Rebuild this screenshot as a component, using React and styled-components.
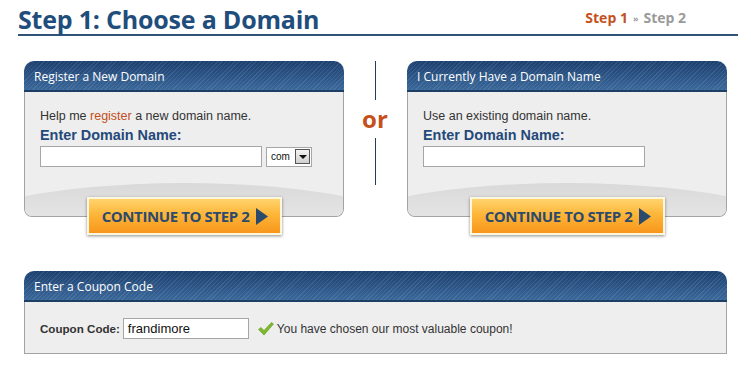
import React from 'react'
import styled, { createGlobalStyle } from 'styled-components';

const GlobalStyle = createGlobalStyle`
    body {
        margin: 0;
        background: #ffffff;
        font-family: "Liberation Sans", Arial, sans-serif;
    }
`;

const Page = styled.div`
    width: 751px;
    padding: 4px 0 0 18px;
    box-sizing: border-box;
`;

const TitleBar = styled.div`
    width: 720px;
    display: flex;
    justify-content: space-between;
    align-items: flex-end;
    border-bottom: 2px solid #2f5477;
    height: 32px;
    box-sizing: border-box;

    h1 {
        margin: 0;
        font-family: "Open Sans", sans-serif;
        font-weight: 700;
        font-size: 25px;
        line-height: 30px;
        color: #1f4d7c;
        letter-spacing: -0.2px;
    }
`;

const Steps = styled.div`
    font-family: "Open Sans", sans-serif;
    font-weight: 700;
    font-size: 14px;
    line-height: 30px;
    margin-right: 52px;
    color: #9a9a9a;

    .current { color: #c4501c; }
    .sep { font-size: 9px; margin: 0 5px; vertical-align: 1px; }
`;

const Row = styled.div`
    display: flex;
    margin: ${p => p.$top}px 0 0 6px;
`;

const Column = styled.div`
    display: flex;
    flex-direction: column;
    align-items: center;
    width: 320px;
`;

const Panel = styled.div`
    width: ${p => p.$width}px;
    align-self: stretch;
`;

const PanelHeader = styled.div`
    height: 31px;
    border-radius: 10px 10px 0 0;
    border-bottom: 2px solid #1d3f66;
    box-sizing: border-box;
    padding: 1px 10px 0;
    display: flex;
    align-items: center;
    font-family: "Open Sans", sans-serif;
    font-size: 12px;
    color: #ffffff;
    background:
        repeating-linear-gradient(135deg, rgba(255,255,255,0) 0 2px, rgba(255,255,255,0.09) 2px 3px),
        linear-gradient(#1b406f, #3a679a);
`;

const PanelBody = styled.div`
    position: relative;
    overflow: hidden;
    height: ${p => p.$height}px;
    box-sizing: border-box;
    background: #eeeeee;
    border: 1px solid #a3a3a3;
    border-top: none;
    border-radius: ${p => p.$rounded ? '0 0 8px 8px' : '0'};
    padding: ${p => p.$padding};

    &::after {
        content: '';
        display: ${p => p.$rounded ? 'block' : 'none'};
        position: absolute;
        left: -30%;
        width: 160%;
        top: 91px;
        height: 120px;
        border-radius: 50%;
        background: linear-gradient(#d9d9d9, #e3e3e3 30px, #e3e3e3);
    }
`;

const Lead = styled.p`
    margin: 0;
    font-size: 12.5px;
    line-height: 16px;
    color: #333333;

    span { color: #c4501c; }
`;

const FieldLabel = styled.div`
    font-size: 14.4px;
    font-weight: 700;
    line-height: 18px;
    margin-top: 2px;
    color: #24497a;
`;

const FieldRow = styled.div`
    display: flex;
    align-items: center;
    gap: 4px;
    margin-top: 2px;
`;

const TextBox = styled.div`
    width: ${p => p.$width}px;
    height: 21px;
    box-sizing: border-box;
    background: #ffffff;
    border: 1px solid #a6a6a6;
    font-size: 13px;
    line-height: 19px;
    padding-left: 4px;
    color: #111111;
`;

const Select = styled.div`
    width: 46px;
    height: 20px;
    box-sizing: border-box;
    border: 1px solid #a6a6a6;
    background: #ffffff;
    display: flex;
    align-items: center;
    justify-content: space-between;
    padding: 0 1px 0 4px;
    font-size: 10px;
    color: #111111;
`;

const SelectArrow = styled.span`
    width: 15px;
    height: 15px;
    box-sizing: border-box;
    border: 1px solid #555555;
    background: linear-gradient(#f4f4f4, #cfcfcf);
    display: flex;
    align-items: center;
    justify-content: center;

    &::before {
        content: '';
        border-left: 4px solid transparent;
        border-right: 4px solid transparent;
        border-top: 4px solid #111111;
        margin-top: 1px;
    }
`;

const ContinueButton = styled.button`
    position: relative;
    z-index: 1;
    margin-top: -20px;
    width: 195px;
    height: 38px;
    padding: 0 0 0 2px;
    border: 2px solid #fff6de;
    box-shadow: 0 1px 3px rgba(0,0,0,0.45);
    background: linear-gradient(#ffd36e, #fdb639 45%, #f8961b);
    display: flex;
    align-items: center;
    justify-content: center;
    gap: 7px;
    font-family: "Open Sans", sans-serif;
    font-weight: 700;
    font-size: 15px;
    letter-spacing: -0.4px;
    color: #2b4a6c;
    cursor: pointer;

    svg { margin-top: 1px; }
`;

const Divider = styled.div`
    width: 63px;
    display: flex;
    flex-direction: column;
    align-items: center;

    span {
        font-family: "Open Sans", sans-serif;
        font-weight: 700;
        font-size: 24px;
        line-height: 38px;
        color: #c4501c;
        margin-left: -1px;
    }
`;

const Rule = styled.i`
    width: 1px;
    height: ${p => p.$length}px;
    background: #1f3d5e;
`;

const CouponRow = styled.div`
    display: flex;
    align-items: center;
    font-size: 12px;
    color: #333333;

    b {
        font-family: "Liberation Sans", Arial, sans-serif;
        font-size: 11.6px;
        color: #333333;
        margin-right: 3px;
    }
`;

const Valid = styled.span`
    display: flex;
    align-items: center;
    gap: 3px;
    margin-left: 9px;
`;

function Arrow() {
    return (
        <svg width="12" height="17" viewBox="0 0 12 17">
            <path d="M0 0 L12 8.5 L0 17 Z" fill="#2b4a6c" />
        </svg>
    )
}

function DomainPanel({ title, lead, withSelect }) {
    return (
        <Column>
            <Panel $width={320}>
                <PanelHeader>{title}</PanelHeader>
                <PanelBody $height={125} $rounded $padding="16px 15px 0">
                    <Lead>{lead}</Lead>
                    <FieldLabel>Enter Domain Name:</FieldLabel>
                    <FieldRow>
                        <TextBox $width={222} />
                        {withSelect && (
                            <Select>com<SelectArrow /></Select>
                        )}
                    </FieldRow>
                </PanelBody>
            </Panel>
            <ContinueButton>CONTINUE TO STEP 2 <Arrow /></ContinueButton>
        </Column>
    )
}

export default function App() {
    return (
        <Page>
            <GlobalStyle />
            <TitleBar>
                <h1>Step 1: Choose a Domain</h1>
                <Steps>
                    <span className='current'>Step 1</span>
                    <span className='sep'>»</span>
                    <span>Step 2</span>
                </Steps>
            </TitleBar>

            <Row $top={25}>
                <DomainPanel
                    title='Register a New Domain'
                    lead={<>Help me <span>register</span> a new domain name.</>}
                    withSelect />
                <Divider>
                    <Rule $length={39} />
                    <span>or</span>
                    <Rule $length={47} />
                </Divider>
                <DomainPanel
                    title='I Currently Have a Domain Name'
                    lead='Use an existing domain name.' />
            </Row>

            <Row $top={36}>
                <Panel $width={703}>
                    <PanelHeader>Enter a Coupon Code</PanelHeader>
                    <PanelBody $height={52} $padding="16px 15px 0">
                        <CouponRow>
                            <b>Coupon Code:</b>
                            <TextBox $width={126}>frandimore</TextBox>
                            <Valid>
                                <svg width="16" height="14" viewBox="0 0 16 14">
                                    <path d="M0.5 7.5 L3 5.5 L6 8.5 L13.5 0.5 L15.5 2 L6 13 Z" fill="#7fb82d" stroke="#5f9a1c" strokeWidth="0.6" />
                                </svg>
                                You have chosen our most valuable coupon!
                            </Valid>
                        </CouponRow>
                    </PanelBody>
                </Panel>
            </Row>
        </Page>
    )
}
